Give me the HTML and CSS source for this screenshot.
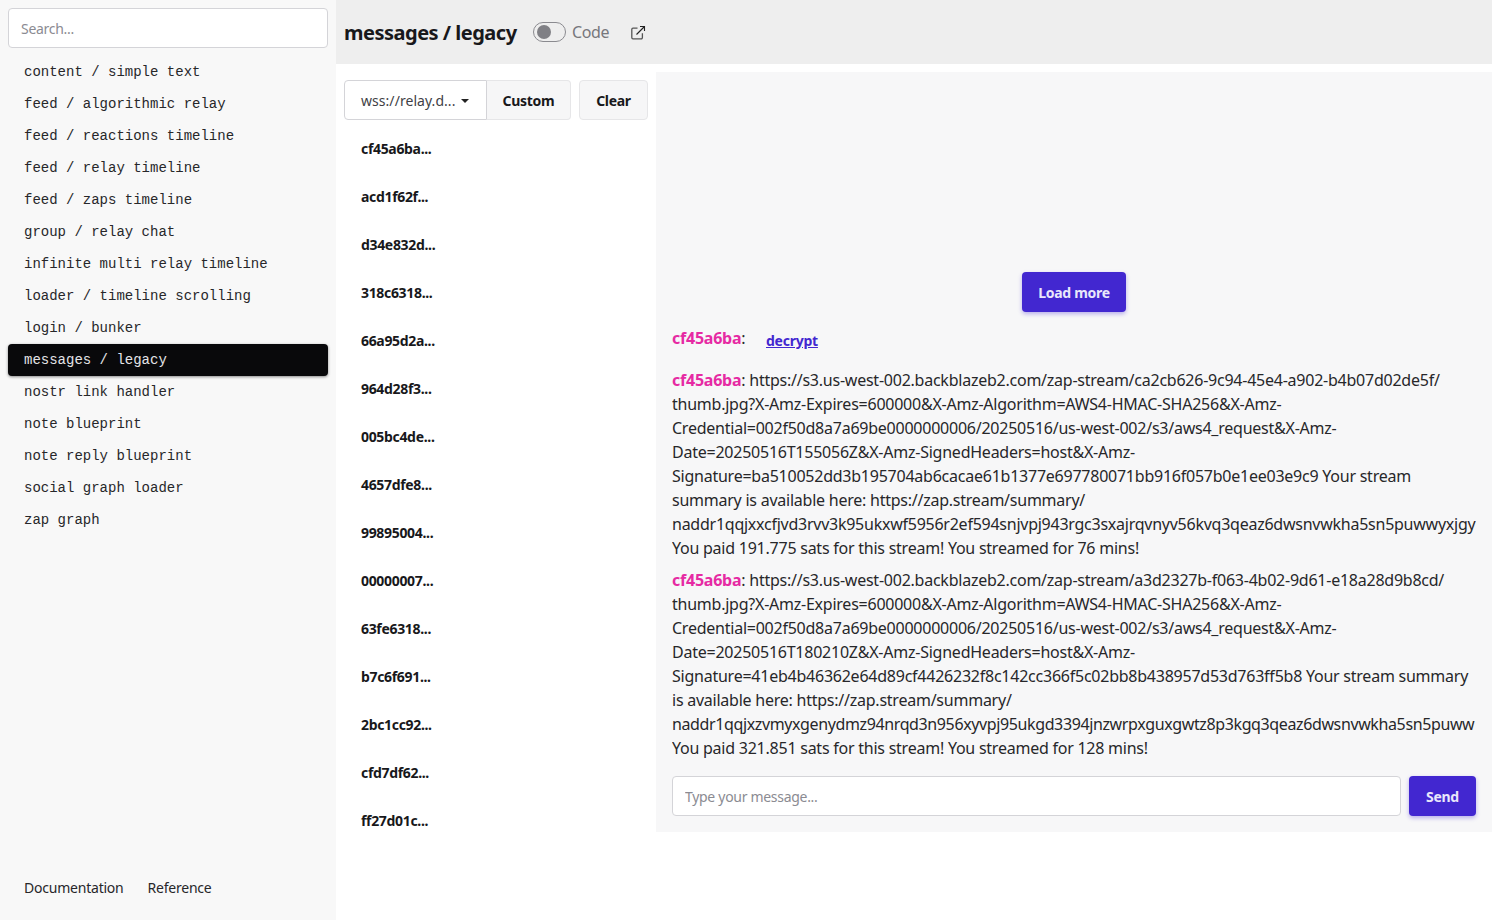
FILE: index.html
```html
<!DOCTYPE html>
<html lang="en">
<head>
<meta charset="utf-8">
<title>messages / legacy</title>
<link rel="stylesheet" href="styles.css">
</head>
<body>
<div class="app">
  <aside class="sidebar">
    <input class="field search" placeholder="Search...">
    <nav class="nav">
      <a class="nav-item">content / simple text</a>
      <a class="nav-item">feed / algorithmic relay</a>
      <a class="nav-item">feed / reactions timeline</a>
      <a class="nav-item">feed / relay timeline</a>
      <a class="nav-item">feed / zaps timeline</a>
      <a class="nav-item">group / relay chat</a>
      <a class="nav-item">infinite multi relay timeline</a>
      <a class="nav-item">loader / timeline scrolling</a>
      <a class="nav-item">login / bunker</a>
      <a class="nav-item active">messages / legacy</a>
      <a class="nav-item">nostr link handler</a>
      <a class="nav-item">note blueprint</a>
      <a class="nav-item">note reply blueprint</a>
      <a class="nav-item">social graph loader</a>
      <a class="nav-item">zap graph</a>
    </nav>
    <footer class="side-foot">
      <a>Documentation</a>
      <a>Reference</a>
    </footer>
  </aside>
  <main class="main">
    <header class="topbar">
      <h1 class="title">messages / legacy</h1>
      <span class="switch"><span class="knob"></span></span>
      <span class="code-label">Code</span>
      <svg class="ext" width="16" height="16" viewBox="0 0 16 16" fill="none" stroke="#555" stroke-width="1.3"><path d="M7.5 3.2H3a1.2 1.2 0 0 0-1.2 1.2v8.2A1.2 1.2 0 0 0 3 13.8h8.2a1.2 1.2 0 0 0 1.2-1.2V8.2"/><path d="M6.5 9.5 14.5 1.5M10 1.5h4.5V6" stroke="#222" stroke-width="1.1"/></svg>
    </header>
    <div class="content">
      <section class="threads">
        <div class="toolbar">
          <div class="group">
            <span class="select">wss://relay.d...<i class="caret"></i></span>
            <button class="btn joined">Custom</button>
          </div>
          <button class="btn">Clear</button>
        </div>
        <ul class="thread-list">
          <li>cf45a6ba...</li>
          <li>acd1f62f...</li>
          <li>d34e832d...</li>
          <li>318c6318...</li>
          <li>66a95d2a...</li>
          <li>964d28f3...</li>
          <li>005bc4de...</li>
          <li>4657dfe8...</li>
          <li>99895004...</li>
          <li>00000007...</li>
          <li>63fe6318...</li>
          <li>b7c6f691...</li>
          <li>2bc1cc92...</li>
          <li>cfd7df62...</li>
          <li>ff27d01c...</li>
        </ul>
      </section>
      <section class="chat">
        <div class="messages">
          <button class="btn primary load">Load more</button>
          <div class="msg head"><b class="who">cf45a6ba</b>: <a class="decrypt">decrypt</a></div>
          <div class="msg"><b class="who">cf45a6ba</b>: https://s3.us-west-002.backblazeb2.com/zap-stream/ca2cb626-9c94-45e4-a902-b4b07d02de5f/<br>thumb.jpg?X-Amz-Expires=600000&amp;X-Amz-Algorithm=AWS4-HMAC-SHA256&amp;X-Amz-<br>Credential=002f50d8a7a69be0000000006/20250516/us-west-002/s3/aws4_request&amp;X-Amz-<br>Date=20250516T155056Z&amp;X-Amz-SignedHeaders=host&amp;X-Amz-<br>Signature=ba510052dd3b195704ab6cacae61b1377e697780071bb916f057b0e1ee03e9c9 Your stream<br>summary is available here: https://zap.stream/summary/<br><span class="fit-a">naddr1qqjxxcfjvd3rvv3k95ukxwf5956r2ef594snjvpj943rgc3sxajrqvnyv56kvq3qeaz6dwsnvwkha5sn5puwwyxjgy</span><br>You paid 191.775 sats for this stream! You streamed for 76 mins!</div>
          <div class="msg"><b class="who">cf45a6ba</b>: https://s3.us-west-002.backblazeb2.com/zap-stream/a3d2327b-f063-4b02-9d61-e18a28d9b8cd/<br>thumb.jpg?X-Amz-Expires=600000&amp;X-Amz-Algorithm=AWS4-HMAC-SHA256&amp;X-Amz-<br>Credential=002f50d8a7a69be0000000006/20250516/us-west-002/s3/aws4_request&amp;X-Amz-<br>Date=20250516T180210Z&amp;X-Amz-SignedHeaders=host&amp;X-Amz-<br>Signature=41eb4b46362e64d89cf4426232f8c142cc366f5c02bb8b438957d53d763ff5b8 Your stream summary<br>is available here: https://zap.stream/summary/<br><span class="fit-b">naddr1qqjxzvmyxgenydmz94nrqd3n956xyvpj95ukgd3394jnzwrpxguxgwtz8p3kgq3qeaz6dwsnvwkha5sn5puww</span><br>You paid 321.851 sats for this stream! You streamed for 128 mins!</div>
        </div>
        <div class="composer">
          <input class="field composer-input" placeholder="Type your message...">
          <button class="btn primary">Send</button>
        </div>
      </section>
    </div>
  </main>
</div>
</body>
</html>
```
FILE: styles.css
```css
* { box-sizing: border-box; }
html, body { margin: 0; height: 100%; }
body {
  font-family: "Noto Sans", sans-serif;
  font-size: 16px;
  color: #18181b;
  background: #fff;
  overflow: hidden;
}
.app { display: flex; height: 920px; }
.sidebar {
  width: 336px;
  flex: none;
  background: #f8f8f8;
  padding: 8px;
  display: flex;
  flex-direction: column;
}
.field {
  display: block;
  height: 40px;
  border: 1px solid #d4d4d8;
  border-radius: 4px;
  background: #fff;
  padding: 0 12px;
  font: 14px "Noto Sans", sans-serif;
  letter-spacing: -0.3px;
  color: #18181b;
  outline: none;
}
.field::placeholder { color: #8b8b92; opacity: 1; }
.search { width: 100%; }
.nav { margin-top: 8px; flex: 1; display: flex; flex-direction: column; }
.nav-item {
  height: 32px;
  padding: 0 16px;
  border-radius: 4px;
  font: 14px/32px "Liberation Mono", monospace;
  color: #27272a;
}
.nav-item.active {
  background: #09090b;
  color: #e4e4e7;
  box-shadow: 0 1px 3px rgba(0,0,0,.45);
}
.side-foot {
  display: flex;
  gap: 24px;
  padding: 0 16px 12px;
  font-size: 14px;
  line-height: 24px;
  letter-spacing: -0.22px;
  color: #27272a;
}
.main { flex: 1; min-width: 0; display: flex; flex-direction: column; }
.topbar {
  height: 64px;
  flex: none;
  background: #eeeeee;
  display: flex;
  align-items: center;
  padding: 0 8px;
}
.title {
  margin: 2px 0 0;
  font-size: 20px;
  line-height: 24px;
  font-weight: 700;
  letter-spacing: -0.5px;
  color: #18181b;
  width: 189px;
  flex: none;
}
.switch {
  width: 33px;
  height: 20px;
  border: 1px solid #8a8a8f;
  border-radius: 10px;
  padding: 2px 3px;
  flex: none;
  margin-top: -1px;
}
.knob { display: block; width: 14px; height: 14px; border-radius: 50%; background: #808085; }
.code-label { margin-left: 6px; color: #77777c; width: 58px; flex: none; line-height: 24px; letter-spacing: -0.4px; }
.ext { margin-top: 1px; }
.content { display: flex; padding: 8px; gap: 8px; height: 768px; }
.threads { width: 304px; flex: none; padding-top: 8px; }
.toolbar { display: flex; gap: 8px; }
.group { display: flex; }
.select {
  width: 143px;
  height: 40px;
  border: 1px solid #d4d4d8;
  border-radius: 4px 0 0 4px;
  background: #fff;
  padding: 1px 0 0 16px;
  font-size: 14px;
  letter-spacing: 0.05px;
  color: #3f3f46;
  display: flex;
  align-items: center;
}
.caret {
  margin-left: 6px;
  border: 4.5px solid transparent;
  border-top: 4.5px solid #222;
  border-bottom: 0;
}
.btn {
  height: 40px;
  border: 1px solid #e6e6e8;
  border-radius: 4px;
  background: #f6f6f7;
  font: 700 14px "Noto Sans", sans-serif;
  letter-spacing: -0.3px;
  color: #18181b;
  padding: 0;
  width: 69px;
  white-space: nowrap;
}
.btn.joined { border-left: 0; border-radius: 0 4px 4px 0; width: 84px; }
.thread-list { list-style: none; margin: 5px 0 0; padding: 0; }
.thread-list li {
  height: 48px;
  padding-left: 17px;
  font-size: 14px;
  font-weight: 700;
  line-height: 48px;
  letter-spacing: -0.33px;
  color: #18181b;
}
.chat {
  flex: 1;
  min-width: 0;
  height: 760px;
  margin-right: -8px;
  background: #f7f7f8;
  padding: 16px;
  display: flex;
  flex-direction: column;
}
.messages { flex: 1; min-height: 0; overflow: hidden; display: flex; flex-direction: column; justify-content: flex-end; }
.btn.primary {
  background: #4227d0;
  border: 0;
  color: #e9e7fb;
  box-shadow: 0 2px 4px rgba(66,39,208,.35);
}
.load { align-self: center; width: 104px; flex: none; margin-bottom: 13px; }
.msg {
  white-space: nowrap;
  font-size: 16px;
  line-height: 24px;
  letter-spacing: -0.24px;
  margin-bottom: 8px;
  color: #27272a;
}
.fit-a { letter-spacing: -0.25px; }
.fit-b { letter-spacing: -0.38px; }
.msg.head { margin-bottom: 19px; position: relative; top: 1px; }
.who { color: #e62aa3; font-weight: 700; }
.decrypt {
  position: absolute;
  top: 3px;
  left: 94px;
  font-size: 14px;
  font-weight: 700;
  color: #4227d0;
  text-decoration: underline;
}
.composer { display: flex; gap: 8px; margin-top: 8px; flex: none; }
.composer-input { flex: 1; min-width: 0; }
.composer .btn { width: 67px; }
```
